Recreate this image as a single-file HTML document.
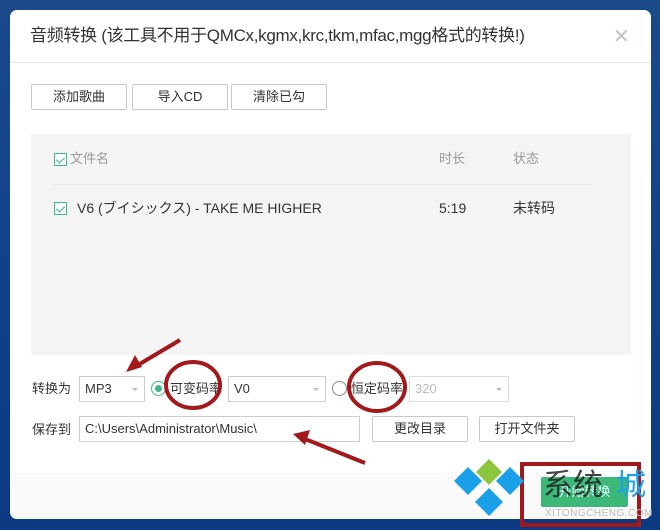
<!DOCTYPE html>
<html><head><meta charset="utf-8"><style>
*{margin:0;padding:0;box-sizing:border-box}
body{width:660px;height:530px;overflow:hidden;background:linear-gradient(180deg,#1a4a8a,#0f4088 60%,#0b3a80);font-family:"Liberation Sans","Noto Sans CJK SC",sans-serif;position:relative}
.dlg{position:absolute;left:10px;top:10px;width:641px;height:509px;background:#fff;border-radius:7px;overflow:hidden}
.title{position:absolute;left:20px;top:14px;font-size:17px;color:#333;letter-spacing:-0.3px;line-height:24px}
.close{position:absolute;left:603px;top:14px;font-size:20px;color:#c4c4c4;font-weight:300}
.hr{position:absolute;left:0;top:52px;width:100%;height:1px;background:#e8e8e8}
.btn{position:absolute;height:26px;border:1px solid #c8c8c8;background:#fff;font-size:13px;color:#333;text-align:center;line-height:24px;border-radius:2px}
.panel{position:absolute;left:21px;top:124px;width:600px;height:221px;background:#f4f4f4}
.cb{position:absolute;width:13px;height:13px;border:1px solid #3cb98b;background:#fff}
.cb:after{content:"";position:absolute;left:3px;top:1px;width:4px;height:7px;border:solid #3cb98b;border-width:0 1.5px 1.5px 0;transform:rotate(45deg)}
.t{position:absolute;font-size:13px;color:#999;white-space:nowrap;line-height:16px}
.r{position:absolute;font-size:14px;color:#333;white-space:nowrap;line-height:18px}
.footer{position:absolute;left:0;top:463px;width:100%;height:46px;background:#fafafa}
.sel{position:absolute;height:26px;border:1px solid #ccc;background:#fff;font-size:13px;color:#333;padding-left:5px;line-height:24px}
.dd:after{content:"";position:absolute;right:6px;top:11px;border:3px solid transparent;border-top:3px solid #bbb}
.lbl{position:absolute;font-size:13px;color:#333;line-height:16px}
</style></head><body>
<div class="dlg">
<div class="title">音频转换 (该工具不用于QMCx,kgmx,krc,tkm,mfac,mgg格式的转换!)</div>
<div class="close">✕</div>
<div class="hr"></div>
<div class="btn" style="left:21px;top:74px;width:96px">添加歌曲</div>
<div class="btn" style="left:122px;top:74px;width:96px">导入CD</div>
<div class="btn" style="left:221px;top:74px;width:96px">清除已勾</div>
<div class="panel">
 <div class="cb" style="left:23px;top:19px"></div>
 <div class="t" style="left:39px;top:17px">文件名</div>
 <div class="t" style="left:408px;top:17px">时长</div>
 <div class="t" style="left:482px;top:17px">状态</div>
 <div style="position:absolute;left:23px;top:50px;width:538px;height:1px;background:#e4e4e4"></div>
 <div class="cb" style="left:23px;top:68px"></div>
 <div class="r" style="left:46px;top:65px">V6 (ブイシックス) - TAKE ME HIGHER</div>
 <div class="r" style="left:408px;top:65px">5:19</div>
 <div class="r" style="left:482px;top:65px">未转码</div>
</div>
<div class="lbl" style="left:22px;top:371px">转换为</div>
<div class="sel dd" style="left:69px;top:366px;width:66px">MP3</div>
<div style="position:absolute;left:141px;top:371px;width:15px;height:15px;border:1px solid #3cb98b;border-radius:50%"><div style="position:absolute;left:3px;top:3px;width:7px;height:7px;background:#3cb98b;border-radius:50%"></div></div>
<div class="lbl" style="left:160px;top:371px">可变码率</div>
<div class="sel dd" style="left:218px;top:366px;width:98px">V0</div>
<div style="position:absolute;left:322px;top:371px;width:15px;height:15px;border:1px solid #888;border-radius:50%"></div>
<div class="lbl" style="left:341px;top:371px">恒定码率</div>
<div class="sel dd" style="left:399px;top:366px;width:100px;color:#bbb;border-color:#ddd">320</div>
<div class="lbl" style="left:22px;top:412px">保存到</div>
<div class="sel" style="left:69px;top:406px;width:281px">C:\Users\Administrator\Music\</div>
<div class="btn" style="left:362px;top:406px;width:96px">更改目录</div>
<div class="btn" style="left:469px;top:406px;width:96px">打开文件夹</div>
<div class="footer"></div>
<div style="position:absolute;left:531px;top:467px;width:87px;height:30px;background:#3cb878;border-radius:2px;color:#dff;font-size:13px;text-align:center;line-height:30px">开始转换</div>
</div>
<svg style="position:absolute;left:0;top:0" width="660" height="530">
<g stroke="#a3191b" stroke-width="4" fill="none">
<line x1="180" y1="340" x2="133" y2="368"/>
<line x1="365" y1="463" x2="300" y2="437"/>
<ellipse cx="193" cy="385" rx="27" ry="23"/>
<ellipse cx="377" cy="387" rx="28" ry="24"/>
<rect x="522" y="464" width="117" height="61"/>
</g>
<polygon points="126,372 135,355 142,367" fill="#a3191b"/>
<polygon points="293,434 310,430 305,445" fill="#a3191b"/>
<polygon points="489,459 502,472 489,485 476,472" fill="#8cc63f"/>
<polygon points="468,467 482,481 468,495 454,481" fill="#1aa0e8"/>
<polygon points="510,467 524,481 510,495 496,481" fill="#1aa0e8"/>
<polygon points="489,488 503,502 489,516 475,502" fill="#1aa0e8"/>
<text x="543" y="495" font-family="Noto Sans CJK SC,sans-serif" font-size="30" fill="#222" opacity="0.85">系统</text>
<text x="616" y="495" font-family="Noto Sans CJK SC,sans-serif" font-size="30" fill="#1aa0e8">城</text>
<text x="545" y="516" font-family="Liberation Sans,sans-serif" font-size="10" fill="#bbb" letter-spacing="0.5">XITONGCHENG.COM</text>
</svg>
</body></html>
